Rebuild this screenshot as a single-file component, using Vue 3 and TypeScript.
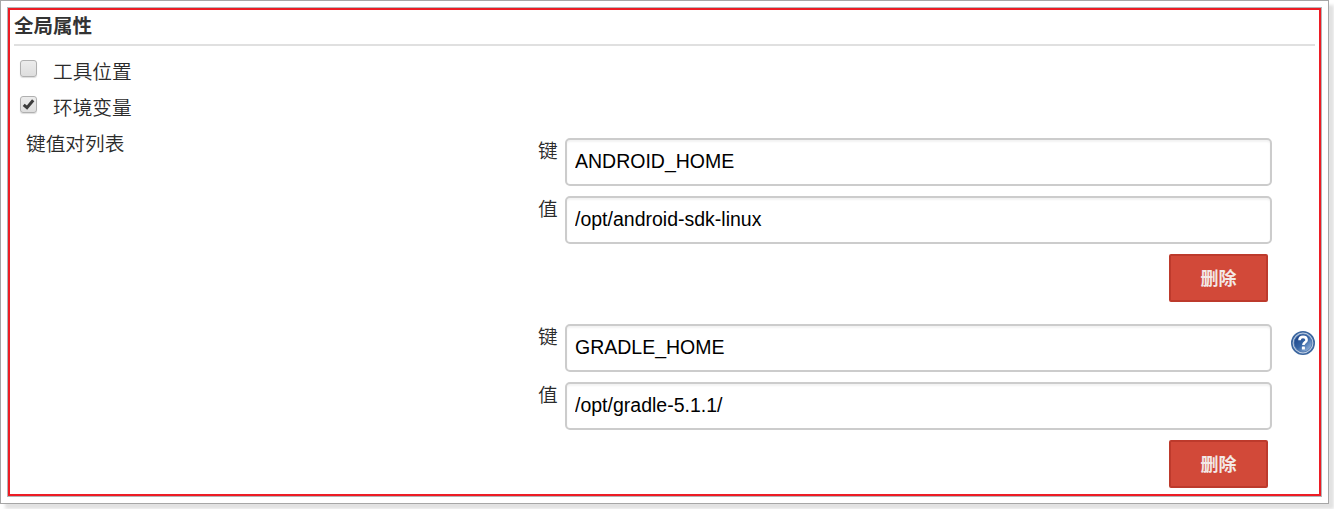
<script setup lang="ts">
import { reactive } from 'vue'

interface Toggle {
  label: string
  checked: boolean
}

interface Pair {
  key: string
  value: string
  help: boolean
}

const toggles = reactive<Toggle[]>([
  { label: '工具位置', checked: false },
  { label: '环境变量', checked: true },
])

const pairs = reactive<Pair[]>([
  { key: 'ANDROID_HOME', value: '/opt/android-sdk-linux', help: false },
  { key: 'GRADLE_HOME', value: '/opt/gradle-5.1.1/', help: true },
])

function remove(index: number) {
  pairs.splice(index, 1)
}
</script>

<template>
  <div class="page">
    <div class="sheet">
      <section class="panel">
        <h2 class="title">全局属性</h2>
        <label v-for="t in toggles" :key="t.label" class="toggle">
          <input v-model="t.checked" class="native" type="checkbox" />
          <span class="box">
            <svg v-if="t.checked" viewBox="0 0 17 17" width="17" height="17">
              <path d="M3.7 8.8 7 11.7 13.2 4.3" fill="none" stroke="#3c3c3c" stroke-width="3" />
            </svg>
          </span>
          <span class="toggle-label">{{ t.label }}</span>
        </label>
        <div class="list">
          <div class="list-label">键值对列表</div>
          <div class="pairs">
            <div v-for="(p, i) in pairs" :key="i" class="pair">
              <div class="fields">
                <div class="field">
                  <span class="name">键</span>
                  <input v-model="p.key" class="text" type="text" spellcheck="false" />
                </div>
                <div class="field">
                  <span class="name">值</span>
                  <input v-model="p.value" class="text" type="text" spellcheck="false" />
                </div>
                <button class="delete" type="button" @click="remove(i)">删除</button>
              </div>
              <svg v-if="p.help" class="help" viewBox="0 0 24 24" width="24" height="24">
                <defs>
                  <linearGradient id="helpFill" x1="0" y1="0" x2="1" y2="1">
                    <stop offset="0.15" stop-color="#1f488c" />
                    <stop offset="0.5" stop-color="#3564a4" />
                    <stop offset="0.9" stop-color="#9bb9df" />
                  </linearGradient>
                </defs>
                <circle cx="12" cy="12" r="11.2" fill="#c3d1e4" stroke="#3b669f" stroke-width="1.6" />
                <circle cx="12" cy="12" r="9" fill="url(#helpFill)" stroke="#4771a9" stroke-width="0.8" />
                <path d="M8.5 9.3C8.5 7 10 5.9 12 5.9c2.1 0 3.6 1.1 3.6 3 0 2.4-3.2 2.5-3.2 5.1" fill="none" stroke="#fff" stroke-width="2.6" />
                <rect x="10.9" y="15.5" width="3" height="3" rx="0.5" fill="#fff" />
              </svg>
            </div>
          </div>
        </div>
      </section>
    </div>
  </div>
</template>

<style>
body {
  background: #fff;
  overflow: hidden;
}
</style>

<style scoped>
* {
  box-sizing: border-box;
}

.page {
  height: 509px;
  overflow: hidden;
}

.sheet {
  width: 1329px;
  height: 504px;
  padding: 6px;
  border: 1px solid #a6a6a6;
  background: #fff;
  box-shadow: 5px 5px 3px 0 #e2e2e2;
  color: #2b2b2b;
  font-family: "Liberation Sans", "Noto Sans CJK SC", sans-serif;
  font-size: 19.7px;
  font-weight: 350;
}

.panel {
  width: 1315px;
  height: 490px;
  padding: 0 4px;
  border: 3px solid #ed1c24;
  outline: 1px solid #b3b5b8;
  outline-offset: -1px;
}

.title {
  height: 36px;
  margin: 0 0 8px;
  border-bottom: 2px solid #e0e0e0;
  color: #333;
  font-size: 19.5px;
  font-weight: 700;
  line-height: 33px;
}

.toggle {
  display: flex;
  height: 36px;
  padding: 6px 0 0 6px;
}

.native {
  position: absolute;
  opacity: 0;
}

.box {
  flex: none;
  width: 17px;
  height: 17px;
  border: 1px solid #b0b0b0;
  border-radius: 3px;
  background: linear-gradient(#ececec, #dedede);
  box-shadow: 0 1px 1px #ddd;
}

.box svg {
  display: block;
  margin: -1px;
}

.toggle-label {
  margin-left: 16px;
  line-height: 24px;
}

.list {
  display: flex;
}

.list-label {
  width: 524px;
  padding-left: 12px;
  line-height: 36px;
}

.pairs {
  display: flex;
  flex-direction: column;
  gap: 22px;
  padding-top: 12px;
}

.pair {
  display: flex;
}

.fields {
  display: flex;
  flex-direction: column;
  gap: 10px;
  width: 734px;
}

.field {
  display: flex;
}

.name {
  width: 27px;
  line-height: 26px;
}

.text {
  width: 707px;
  height: 48px;
  padding: 0 8px 1px;
  border: 2px solid #ccc;
  border-radius: 5px;
  outline: none;
  background: #fff;
  box-shadow: inset 0 2px 2px rgba(0, 0, 0, 0.05);
  color: #000;
  font: 19.5px "Liberation Sans", Arial, sans-serif;
}

.delete {
  align-self: flex-end;
  width: 99px;
  height: 48px;
  margin-right: 4px;
  padding: 0 0 2px;
  border: 2px solid #bd3a2c;
  border-radius: 2px;
  background: #d24939;
  color: #f3e9e7;
  font: 700 18px "Liberation Sans", "Noto Sans CJK SC", sans-serif;
}

.help {
  margin: 7px 0 0 19px;
}
</style>
